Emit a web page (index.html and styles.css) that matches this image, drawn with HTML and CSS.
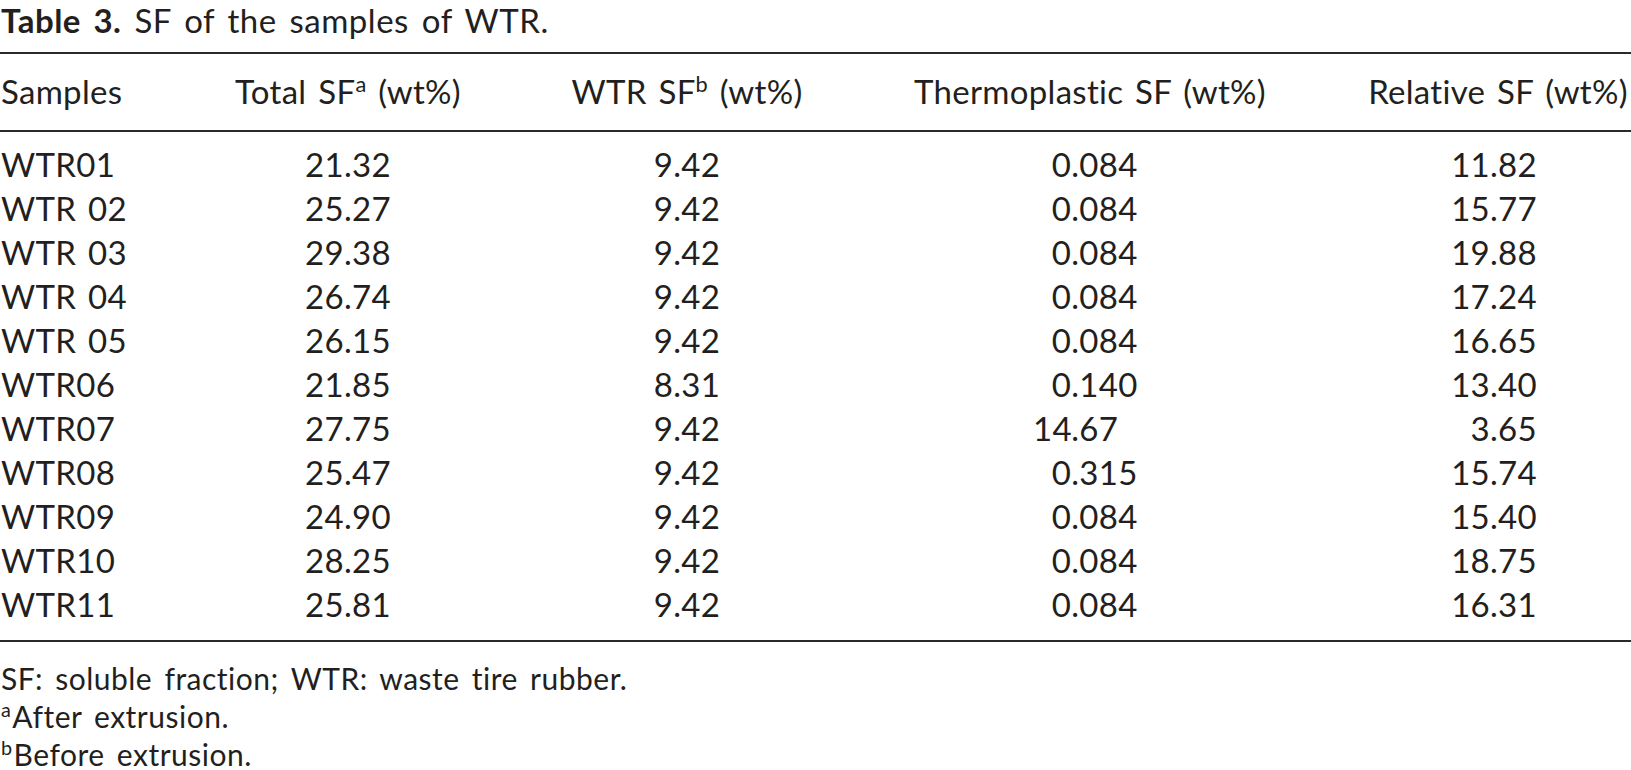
FILE: index.html
```html
<!DOCTYPE html>
<html lang="en">
<head>
<meta charset="utf-8">
<title>Table 3. SF of the samples of WTR.</title>
<link rel="stylesheet" href="styles.css">
</head>
<body>
<div class="page">
  <p class="caption"><span class="label">Table 3.</span> SF of the samples of WTR.</p>
  <table class="data">
    <colgroup>
      <col class="w1"><col class="w2"><col class="w3"><col class="w4"><col class="w5">
    </colgroup>
    <thead>
      <tr>
        <th class="c1">Samples</th>
        <th>Total SF<sup>a</sup> (wt%)</th>
        <th>WTR SF<sup>b</sup> (wt%)</th>
        <th>Thermoplastic SF (wt%)</th>
        <th>Relative SF (wt%)</th>
      </tr>
    </thead>
    <tbody>
      <tr><td class="c1">WTR01</td><td>21.32</td><td>9.42</td><td class="c4"><span class="i">0</span>.084</td><td class="c5">11.82</td></tr>
      <tr><td class="c1">WTR 02</td><td>25.27</td><td>9.42</td><td class="c4"><span class="i">0</span>.084</td><td class="c5">15.77</td></tr>
      <tr><td class="c1">WTR 03</td><td>29.38</td><td>9.42</td><td class="c4"><span class="i">0</span>.084</td><td class="c5">19.88</td></tr>
      <tr><td class="c1">WTR 04</td><td>26.74</td><td>9.42</td><td class="c4"><span class="i">0</span>.084</td><td class="c5">17.24</td></tr>
      <tr><td class="c1">WTR 05</td><td>26.15</td><td>9.42</td><td class="c4"><span class="i">0</span>.084</td><td class="c5">16.65</td></tr>
      <tr><td class="c1">WTR06</td><td>21.85</td><td>8.31</td><td class="c4"><span class="i">0</span>.140</td><td class="c5">13.40</td></tr>
      <tr><td class="c1">WTR07</td><td>27.75</td><td>9.42</td><td class="c4"><span class="i">14</span>.67</td><td class="c5">3.65</td></tr>
      <tr><td class="c1">WTR08</td><td>25.47</td><td>9.42</td><td class="c4"><span class="i">0</span>.315</td><td class="c5">15.74</td></tr>
      <tr><td class="c1">WTR09</td><td>24.90</td><td>9.42</td><td class="c4"><span class="i">0</span>.084</td><td class="c5">15.40</td></tr>
      <tr><td class="c1">WTR10</td><td>28.25</td><td>9.42</td><td class="c4"><span class="i">0</span>.084</td><td class="c5">18.75</td></tr>
      <tr><td class="c1">WTR11</td><td>25.81</td><td>9.42</td><td class="c4"><span class="i">0</span>.084</td><td class="c5">16.31</td></tr>
    </tbody>
  </table>
  <div class="notes">
    <p>SF: soluble fraction; WTR: waste tire rubber.</p>
    <p><sup>a</sup>After extrusion.</p>
    <p><sup>b</sup>Before extrusion.</p>
  </div>
</div>
</body>
</html>
```
FILE: styles.css
```css
html, body {
  margin: 0;
  padding: 0;
  background: #ffffff;
  overflow: hidden;
}

.page {
  width: 1631px;
  font-family: "Lato", "Open Sans", "Liberation Sans", sans-serif;
  color: #231f20;
  font-variant-numeric: tabular-nums;
}

.caption {
  margin: 0 0 12px 0;
  padding-left: 1px;
  font-size: 33px;
  line-height: 40px;
  letter-spacing: 0.5px;
  word-spacing: 4px;
  white-space: nowrap;
}

.caption .label {
  font-weight: 700;
}

.data {
  width: 1631px;
  table-layout: fixed;
  border-collapse: collapse;
  border-top: 2px solid #2a2a2a;
  border-bottom: 2px solid #2a2a2a;
  font-size: 33px;
  letter-spacing: 0.3px;
  word-spacing: 3px;
}

.w1 { width: 137px; }
.w2 { width: 422px; }
.w3 { width: 256px; }
.w4 { width: 550px; }
.w5 { width: 266px; }

.data th {
  font-weight: 400;
  text-align: center;
  line-height: 32px;
  padding: 21px 0 23px 0;
  white-space: nowrap;
  border-bottom: 2px solid #2a2a2a;
}

.data td {
  text-align: center;
  line-height: 44px;
  padding: 0;
  white-space: nowrap;
}

.data .c1 {
  text-align: left;
  padding-left: 1px;
}

.data tbody tr:first-child td {
  padding-top: 10px;
}

.data tbody tr:last-child td {
  padding-bottom: 14px;
}

.data td.c4 {
  text-align: left;
  padding-left: 218px;
}

.data td.c4 .i {
  display: inline-block;
  width: 2ch;
  text-align: right;
}

.data td.c5 {
  text-align: right;
  padding-right: 94px;
}

.data sup {
  font-size: 0.66em;
  line-height: 0;
  vertical-align: 0.56em;
}

.notes {
  margin-top: 17px;
  font-size: 30px;
  letter-spacing: 0.5px;
  word-spacing: 4px;
}

.notes p {
  margin: 0;
  padding-left: 1px;
  line-height: 38px;
  white-space: nowrap;
}

.notes sup {
  font-size: 0.66em;
  line-height: 0;
  vertical-align: 0.56em;
  margin-right: 1px;
}
```
